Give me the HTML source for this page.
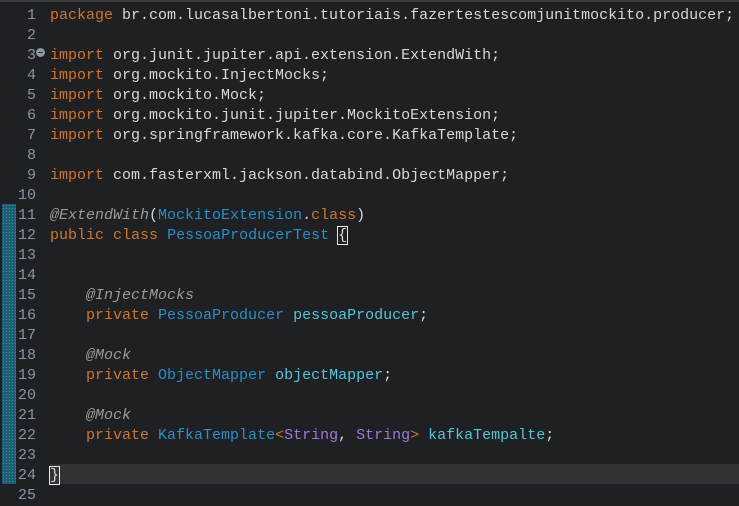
<!DOCTYPE html>
<html><head><meta charset="utf-8"><style>
html,body{margin:0;padding:0;background:#1f2024;width:739px;height:497px;overflow:hidden}
.top{position:absolute;left:0;top:0;width:739px;height:2px;background:#3a3b3f}
.bar{position:absolute;left:2px;top:204px;width:14px;height:280px;background:#1f5f75;background-image:radial-gradient(#3a8aa0 0.6px,transparent 0.8px);background-size:3px 3px}
.hl{position:absolute;left:50px;top:464px;width:689px;height:20px;background:#323232}
pre{position:absolute;left:0;top:6px;margin:0;font-family:"Liberation Mono",monospace;font-size:15px;line-height:20px;color:#d8d8d8}
.ln{position:absolute;left:0;top:6px;width:36px;text-align:right;font-family:"Liberation Mono",monospace;font-size:15px;line-height:20px;color:#8597a3;margin:0}
.code{left:50px}
.k{color:#d0762c}.a{color:#9a9a9a;font-style:italic}.t{color:#2b8ec4}.f{color:#56c4d6}.s{color:#a177d6}
.dot{position:absolute;left:36px;top:48px;width:9px;height:9px;border-radius:50%;background:#8d98a3}
.dot:after{content:"";position:absolute;left:2px;top:4px;width:5px;height:1px;background:#2a2b2e}
.cur{outline:1px solid #e8e8e8}
</style></head><body>
<div class="top"></div>
<div class="bar"></div>
<div class="hl"></div>
<pre class="ln">1
2
3
4
5
6
7
8
9
10
11
12
13
14
15
16
17
18
19
20
21
22
23
24
25</pre>
<div class="dot"></div>
<pre class="code"><span class="k">package</span> br.com.lucasalbertoni.tutoriais.fazertestescomjunitmockito.producer;

<span class="k">import</span> org.junit.jupiter.api.extension.ExtendWith;
<span class="k">import</span> org.mockito.InjectMocks;
<span class="k">import</span> org.mockito.Mock;
<span class="k">import</span> org.mockito.junit.jupiter.MockitoExtension;
<span class="k">import</span> org.springframework.kafka.core.KafkaTemplate;

<span class="k">import</span> com.fasterxml.jackson.databind.ObjectMapper;

<span class="a">@ExtendWith</span>(<span class="t">MockitoExtension</span>.<span class="k">class</span>)
<span class="k">public</span> <span class="k">class</span> <span class="t">PessoaProducerTest</span> <span class="cur">{</span>


    <span class="a">@InjectMocks</span>
    <span class="k">private</span> <span class="t">PessoaProducer</span> <span class="f">pessoaProducer</span>;

    <span class="a">@Mock</span>
    <span class="k">private</span> <span class="t">ObjectMapper</span> <span class="f">objectMapper</span>;

    <span class="a">@Mock</span>
    <span class="k">private</span> <span class="t">KafkaTemplate</span><span class="k">&lt;</span><span class="s">String</span>, <span class="s">String</span><span class="k">&gt;</span> <span class="f">kafkaTempalte</span>;

<span class="cur">}</span>
</pre>
</body></html>
